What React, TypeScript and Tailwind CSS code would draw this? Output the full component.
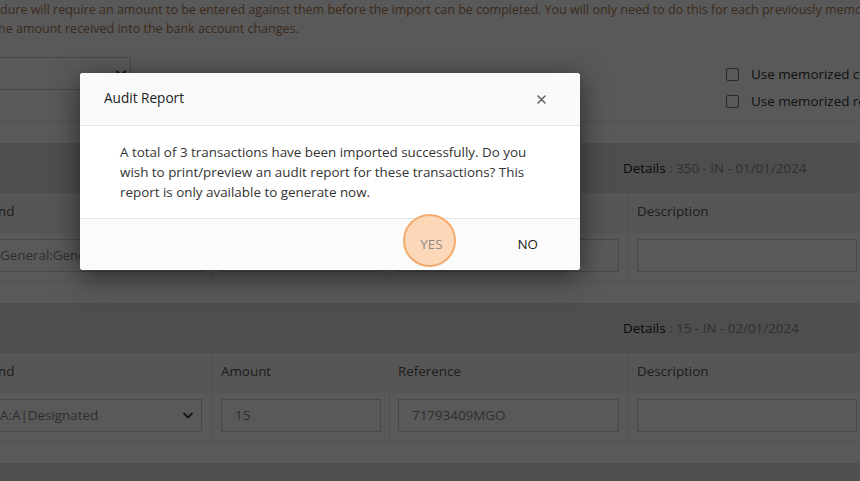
import React from "react";

function Chevron({ className }: { className?: string }) {
  return (
    <svg className={className} width="10" height="7" viewBox="0 0 10 7" fill="none">
      <path d="M1 1.5 L5 5.5 L9 1.5" stroke="#444" strokeWidth="1.8" strokeLinecap="round" strokeLinejoin="round" />
    </svg>
  );
}

function Section({ details, fund, amount, reference }: { details: string; fund: string; amount: string; reference: string }) {
  return (
    <div className="mb-[21px]">
      <div className="h-[50px] bg-[#e0e0e0] flex items-center pl-[623px] text-[13.4px] whitespace-nowrap">
        <span className="text-[#222]">Details</span>
        <span className="text-[#888]">&nbsp;: {details}</span>
      </div>
      <div className="grid grid-cols-[212px_177px_238px_240px] text-[13.4px]">
        <div className="h-[40px] pb-[3px] bg-[#f5f5f5] flex items-center text-[#555] whitespace-nowrap">
          <span className="-ml-[17px]">Fund</span>
        </div>
        <div className="h-[40px] pb-[3px] bg-[#f5f5f5] border-l border-[#e8e8e8] flex items-center px-2 text-[#555]">Amount</div>
        <div className="h-[40px] pb-[3px] bg-[#f5f5f5] border-l border-[#e8e8e8] flex items-center px-2 text-[#555]">Reference</div>
        <div className="h-[40px] pb-[3px] bg-[#f5f5f5] border-l border-[#e8e8e8] flex items-center pl-[9px] text-[#555]">Description</div>

        <div className="pt-[6px] pb-[9px] pr-[10px] border-b border-[#ececec]">
          <div className="-ml-px h-[33px] border border-[#cfcfcf] flex items-center justify-between pr-[8px] text-[#888] whitespace-nowrap overflow-hidden">
            <span>{fund}</span>
            <Chevron />
          </div>
        </div>
        <div className="pt-[6px] pb-[9px] px-2 border-l border-b border-[#ececec]">
          <div className="h-[33px] border border-[#cfcfcf] flex items-center px-[13px] text-[#888]">{amount}</div>
        </div>
        <div className="pt-[6px] pb-[9px] px-2 border-l border-b border-[#ececec]">
          <div className="h-[33px] border border-[#cfcfcf] flex items-center px-[13px] text-[#888]">{reference}</div>
        </div>
        <div className="pt-[6px] pb-[9px] pl-[9px] pr-[11px] border-l border-b border-[#ececec]">
          <div className="h-[33px] w-[220px] border border-[#cfcfcf]"></div>
        </div>
      </div>
    </div>
  );
}

export default function App() {
  return (
    <div className="relative w-[860px] h-[481px] overflow-hidden bg-white font-['Open_Sans',sans-serif]">
      {/* Page */}
      <div className="text-[12.5px] leading-[19px] text-[#b27a4e] whitespace-nowrap">
        <div>dure will require an amount to be entered against them before the import can be completed. You will only need to do this for each previously memorized</div>
        <div className="-ml-[2px]">he amount received into the bank account changes.</div>
      </div>

      <div className="mt-[19px] flex items-start justify-between">
        <div className="-ml-px w-[132px] h-[33px] border border-[#cfcfcf] flex items-center justify-end pr-[4px]">
          <Chevron />
        </div>
        <div className="w-[134px] pt-[7px] flex flex-col gap-[7px] text-[13.4px] text-[#333] whitespace-nowrap">
          <div className="h-[20px] flex items-center gap-[12px]">
            <span className="w-[13px] h-[13px] border border-[#777] rounded-[2px] bg-white shrink-0"></span>
            <span>Use memorized codes</span>
          </div>
          <div className="h-[20px] flex items-center gap-[12px]">
            <span className="w-[13px] h-[13px] border border-[#777] rounded-[2px] bg-white shrink-0"></span>
            <span>Use memorized references</span>
          </div>
        </div>
      </div>
      <div className="mt-[10px] border-t border-[#e5e5e5]"></div>

      <div className="mt-[21px]">
        <Section details="350 - IN - 01/01/2024" fund="General:General" amount="" reference="" />
        <Section details="15 - IN - 02/01/2024" fund="A:A|Designated" amount="15" reference="71793409MGO" />
        <div className="h-[50px] bg-[#e0e0e0]"></div>
      </div>

      {/* Overlay */}
      <div className="absolute inset-0 bg-black/65"></div>

      {/* Modal */}
      <div className="absolute left-[80px] top-[73px] w-[500px] bg-white rounded-[3px] shadow-[0_6px_28px_rgba(0,0,0,0.55)] overflow-visible">
        <div className="h-[53px] bg-[#fafafa] border-b border-[#e6e6e6] rounded-t-[3px] flex items-center justify-between pl-[24px] pr-[34px]">
          <span className="text-[13.6px] text-[#222] pb-[1px]">Audit Report</span>
          <svg width="9" height="9" viewBox="0 0 9 9">
            <path d="M1 1 L8 8 M8 1 L1 8" stroke="#666" strokeWidth="1.6" strokeLinecap="round" />
          </svg>
        </div>
        <div className="pt-[16px] pb-[16px] pl-[40px] pr-[40px] text-[13.4px] leading-[20px] text-[#333]">
          A total of 3 transactions have been imported successfully. Do you wish to print/preview an audit report for these transactions? This report is only available to generate now.
        </div>
        <div className="h-[52px] bg-[#fbfbfb] border-t border-[#e6e6e6] rounded-b-[3px] flex items-center justify-end pr-[42px] gap-[75px] text-[13.4px] leading-[20px]">
          <span className="relative pb-[1px]">
            <span className="absolute -left-[17px] -top-[20px] w-[53px] h-[53px] rounded-full bg-[#fcd8b9] border-2 border-[#f4ab6e]"></span>
            <span className="relative text-[#8a8a8a]">YES</span>
          </span>
          <span className="text-[#222] pb-[1px]">NO</span>
        </div>
      </div>
    </div>
  );
}
